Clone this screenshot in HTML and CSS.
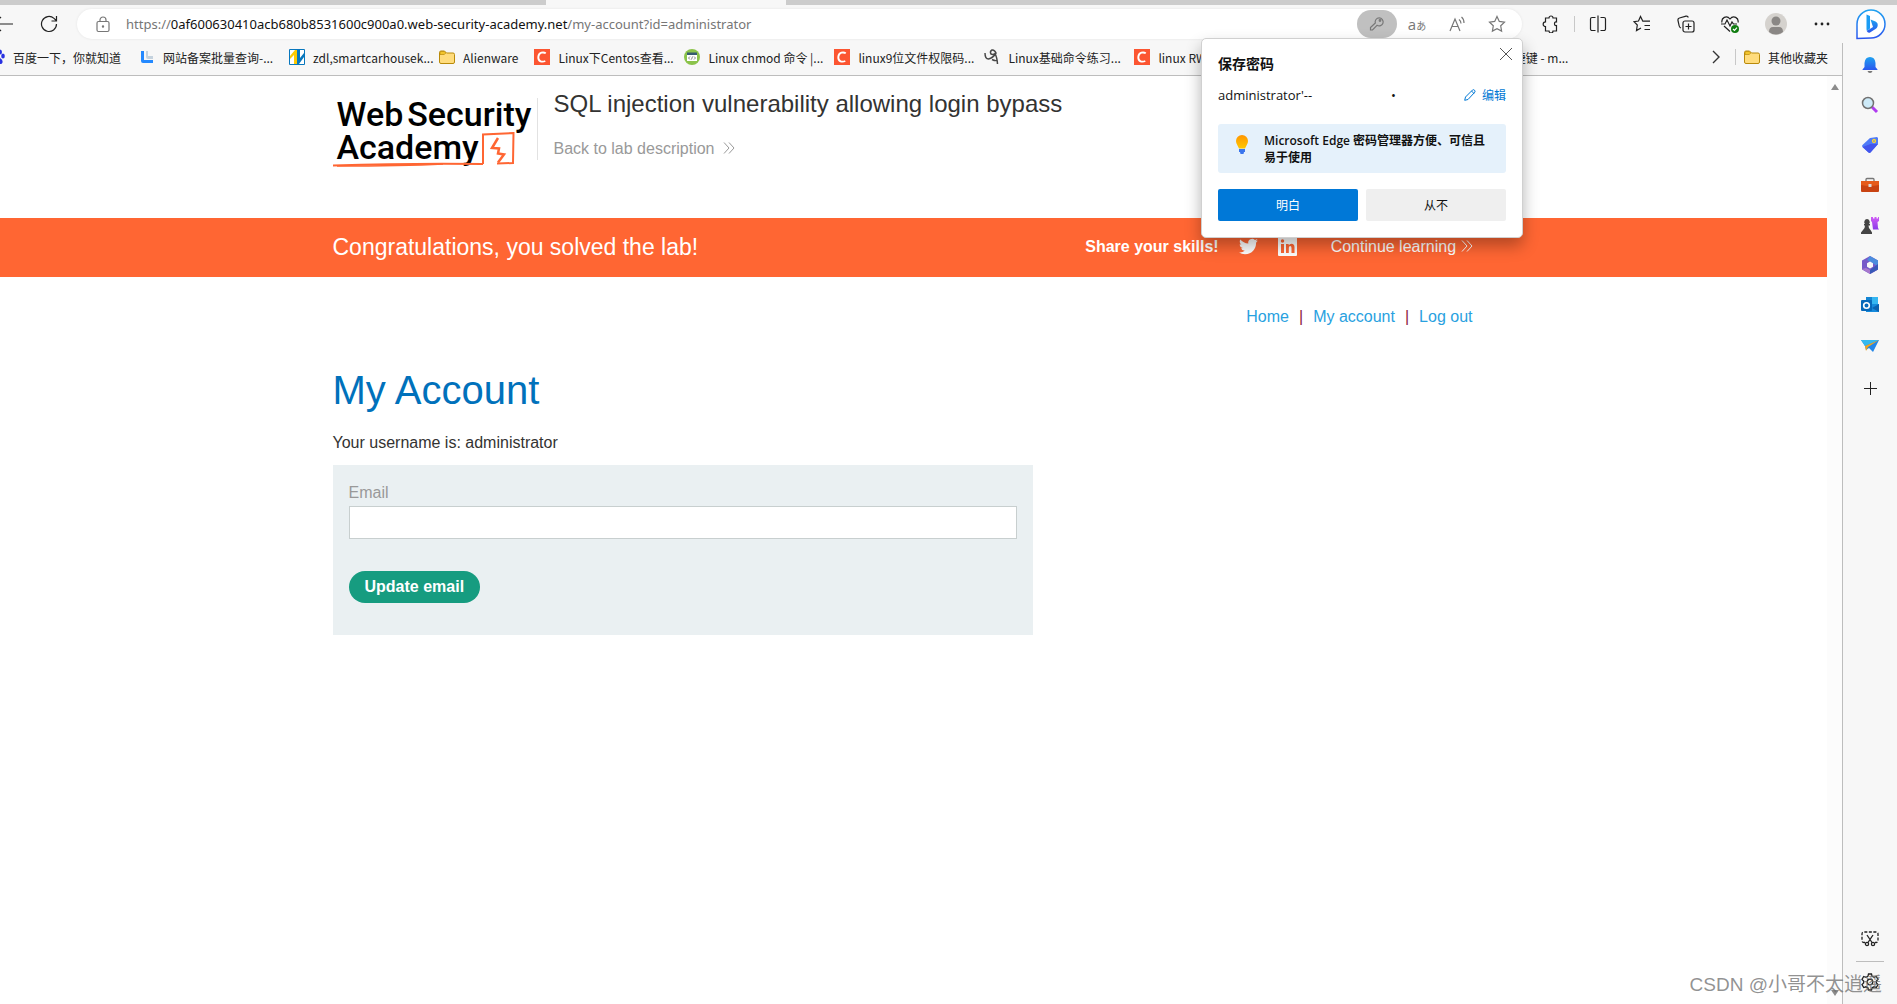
FILE: index.html
```html
<!DOCTYPE html>
<html lang="en">
<head>
    <meta charset="UTF-8">
    <meta name="viewport" content="width=device-width, initial-scale=1.0">
    <title>SQL injection vulnerability allowing login bypass</title>
    <link rel="stylesheet" href="styles.css">
</head>
<body>
    <!-- Shared icons -->
    <svg class="defs" width="0" height="0" aria-hidden="true">
        <defs>
            <linearGradient id="blue" x1="0" y1="0" x2="0" y2="1"><stop offset="0" stop-color="#1fa2f0"/><stop offset="1" stop-color="#2a56ee"/></linearGradient>
            <linearGradient id="violet" x1="0" y1="0" x2="0" y2="1"><stop offset="0" stop-color="#d05cf5"/><stop offset="1" stop-color="#8a3be8"/></linearGradient>
            <linearGradient id="bulb" x1="0" y1="0" x2="0" y2="1"><stop offset="0" stop-color="#ff9500"/><stop offset="1" stop-color="#ffc800"/></linearGradient>
        </defs>
        <symbol id="folder" viewBox="0 0 16 16"><path d="M.5 3.5a1.500 1.500 0 0 1 1.500-1.500h3.500l2 2H14a1.500 1.500 0 0 1 1.500 1.500V13a1.500 1.500 0 0 1-1.500 1.500H2A1.500 1.500 0 0 1 .5 13z" fill="#ffdc7d" stroke="#b98a0a"/><path d="M1 3.500Q1 2.500 2 2.500h3.300l1.500 1.500-1.500 1.500H1z" fill="#f3c52c" stroke="#b98a0a" stroke-width=".7"/></symbol>
        <symbol id="csdn" viewBox="0 0 16 16"><path d="M0 0h16v16H0z" fill="#fc5531"/><path d="M11.800 4.300C9.500 2.800 4.800 3 4.300 8c-.3 4.800 4 5.300 7 4" fill="none" stroke="#fff" stroke-width="1.900"/></symbol>
        <symbol id="chevrons" viewBox="0 0 12 12"><path d="M1 .5 6 6l-5 5.500M6 .5 11 6l-5 5.500" fill="none" stroke="currentColor"/></symbol>
    </svg>

    <div class="tab-strip"><div class="active-tab"></div></div>

    <header class="toolbar">
        <button class="back" aria-label="Back"><svg width="20" height="16" viewBox="0 0 20 16"><path d="M20 8H1M8 1 1 8l7 7"/></svg></button>
        <button class="refresh" aria-label="Refresh"><svg width="18" height="18" viewBox="0 0 18 18"><path d="M16.500 9A7.500 7.500 0 1 1 14 3.400L16.300 5.500M16.500 1v5h-5"/></svg></button>
        <div class="address-bar">
            <svg class="lock" width="14" height="17" viewBox="0 0 14 17"><rect x="1" y="5.500" width="12" height="10" rx="1.500"/><path d="M4 5.500V4a3 3 0 0 1 6 0v1.500"/><circle cx="7" cy="10.500" r=".6"/></svg>
            <div class="url" role="textbox" aria-label="Address">https://<b>0af600630410acb680b8531600c900a0.web-security-academy.net</b>/my-account?id=administrator</div>
            <button class="key" aria-label="Saved passwords"><svg width="16" height="16" viewBox="0 0 16 16"><path d="M8 9.300 3.500 14H1.500v-2.500L6.300 7A4 4 0 1 1 8 9.300z"/><circle cx="11" cy="4.500" r=".8"/></svg></button>
            <button aria-label="Translate"><span class="translate">a<small>あ</small></span></button>
            <button aria-label="Read aloud"><svg width="16" height="16" viewBox="0 0 16 16"><path d="M1 15 6 3l5 12M3 10.500h6M10 3.500q2 1.500 2 4M12.500 1Q15 3 15 7"/></svg></button>
            <button aria-label="Add to favorites"><svg width="18" height="18" viewBox="0 0 18 18"><path d="m9 1.500 2.300 4.900 5.200.7-3.800 3.700.9 5.300L9 13.600l-4.600 2.500.9-5.300-3.800-3.700 5.200-.7z"/></svg></button>
        </div>
        <button aria-label="Extensions"><svg width="18" height="18" viewBox="0 0 18 18"><path d="M5 3h3a2 2 0 0 1 4 0h3.500v4q-2-.5-2 1.700t2 1.800V16H12a2 2 0 0 1-4 0H4.500v-4.500a2.300 2.300 0 1 1 0-4.700V3z"/></svg></button>
        <span class="divider"></span>
        <button aria-label="Split screen"><svg width="18" height="18" viewBox="0 0 18 18"><path d="M6.500 2.500H3A1.500 1.500 0 0 0 1.500 4v10A1.500 1.500 0 0 0 3 15.500h3.500M9 .5v17M11.500 2.500H15A1.500 1.500 0 0 1 16.500 4v10a1.500 1.500 0 0 1-1.500 1.500h-3.500"/></svg></button>
        <button aria-label="Favorites"><svg width="18" height="18" viewBox="0 0 18 18"><path d="M9.500 5.500 7.500 1.500 5.500 6 1 6.700 4.300 10l-.8 5.500 4.500-2.600M7.500 1.500l2.300 4.700H17M11.500 10.500H17M11.500 14.500H17"/></svg></button>
        <button aria-label="Collections"><svg width="18" height="18" viewBox="0 0 18 18"><rect x="6" y="6" width="11" height="11" rx="2"/><path d="M11.500 8.500v6M8.500 11.500h6M4 13Q2.500 12.500 2.200 11L1 5.500Q.6 3.500 2.500 3L9 1.200q1.800-.4 2.300 1.300"/></svg></button>
        <button aria-label="Browser essentials"><svg width="18" height="18" viewBox="0 0 18 18"><path d="M1 7.500C0 3 5.500-.5 9 4c3.500-4.500 9-1 8 3.500M0 9h4l2-4 3 6 2-4 1.500 2H16M3 11l6 5.500"/><circle class="ok" cx="14" cy="14" r="4"/><path class="tick" d="m12 14 1.500 1.500L16 12.700"/></svg></button>
        <button class="profile" aria-label="Profile"><svg width="22" height="22" viewBox="0 0 22 22"><circle cx="11" cy="11" r="11" fill="#d5d2ce"/><circle cx="11" cy="8" r="4.500" fill="#8a8785"/><path d="M4 19q0-5 4-5h6q4 0 4 5-3 2.500-7 2.500T4 19z" fill="#8a8785"/></svg></button>
        <button aria-label="Settings and more"><svg class="dots" width="16" height="4" viewBox="0 0 16 4"><circle cx="2" cy="2" r="1.400"/><circle cx="8" cy="2" r="1.400"/><circle cx="14" cy="2" r="1.400"/></svg></button>
        <button class="bing" aria-label="Bing"><svg width="32" height="32" viewBox="0 0 32 32"><path d="M2 30.500V16A14 14 0 1 1 16 30z" fill="#fff" stroke="url(#blue)" stroke-width="1.500"/><path d="M11.500 6.500 15 8v12.500L12 23q-.5-.5-.5-2z" fill="#1b9df5"/><path d="m15.500 11.500 5 2q3 1.500 2 5-.5 1.500-2 2.500L15 24.500q-2 1-3.300-1.500l6.300-4z" fill="url(#blue)"/></svg></button>
    </header>

    <div class="window">
        <div class="main">
            <nav class="bookmarks" aria-label="Bookmarks">
                <a href="#"><svg width="16" height="16" viewBox="0 0 16 16"><g fill="#2932e1"><ellipse cx="11" cy="3" rx="2" ry="2.500"/><ellipse cx="14" cy="7" rx="1.800" ry="2.500"/><ellipse cx="2" cy="7" rx="1.800" ry="2.500"/><ellipse cx="6" cy="3" rx="2" ry="2.500"/><path d="M8 6q2 0 3.500 3.500 2.500 1 2 4-.5 2-3 1.500H5q-3 0-2.500-3Q3 10 5 9q1-3 3-3z"/></g><path d="M7 11v3M10 11v3" stroke="#fff"/></svg><span>百度一下，你就知道</span></a>
                <a href="#"><svg width="16" height="16" viewBox="0 0 16 16"><path d="M2 2h3v9H14v3H4q-2 0-2-2z" fill="#2489ff"/><path d="M7 2h2v5h5v3H9Q7 10 7 8z" fill="#c4d2de"/></svg><span>网站备案批量查询-...</span></a>
                <a href="#"><svg width="16" height="16" viewBox="0 0 16 16"><path d="M.5.500h15v15H.5z" fill="#fff" stroke="#0877bd"/><path d="M1 7 6 1h2v14H5V6L1 10z" fill="#ffca00"/><path d="M8 1h3v8l4-5v4l-5 7H8z" fill="#0877bd"/></svg><span>zdl,smartcarhousek...</span></a>
                <a href="#" class="short"><svg width="16" height="16"><use href="#folder"/></svg><span>Alienware</span></a>
                <a href="#"><svg width="16" height="16"><use href="#csdn"/></svg><span>Linux下Centos查看...</span></a>
                <a href="#"><svg width="16" height="16" viewBox="0 0 16 16"><circle cx="8" cy="8" r="8" fill="#8bc34a"/><path d="M3 4h10v8H3z" fill="#fff"/><path d="M3 3.500h10V6H3z" fill="#365b70"/><path d="M6 7.500 4.500 9 6 10.500M10 7.500 11.500 9 10 10.500M8.500 7.500l-1 3" fill="none" stroke="#555" stroke-width=".7"/></svg><span>Linux chmod 命令 |...</span></a>
                <a href="#"><svg width="16" height="16"><use href="#csdn"/></svg><span>linux9位文件权限码...</span></a>
                <a href="#"><svg width="16" height="16" viewBox="0 0 16 16"><path d="M1 4q0 6 3.500 6Q9 9 12 4q-1.500-3.500-4-3Q5.500 2.500 7 5q2 1 4-.5Q13 8 13.500 15M8 10.500q3 1.500 5 1" fill="none" stroke="#484848" stroke-width="1.500"/></svg><span>Linux基础命令练习...</span></a>
                <a href="#"><svg width="16" height="16"><use href="#csdn"/></svg><span>linux RW...</span></a>
                <a href="#" aria-label="Bookmark"><svg width="16" height="16"><use href="#csdn"/></svg><span></span></a>
                <a href="#" class="last"><svg width="16" height="16"><use href="#csdn"/></svg><span>快捷键 - m...</span></a>
                <button class="more" aria-label="More bookmarks"><svg width="8" height="14" viewBox="0 0 8 14"><path d="m1 1 6 6-6 6"/></svg></button>
                <span class="divider"></span>
                <a href="#" class="short other"><svg width="16" height="16"><use href="#folder"/></svg><span>其他收藏夹</span></a>
            </nav>

            <div class="viewport">
                <div class="page">
                    <div class="container lab-header">
                        <a href="#" class="logo" aria-label="Web Security Academy">
                            <span class="logo-line">Web <span>Security</span></span>
                            <span class="logo-line">Academy</span>
                            <svg class="logo-mark" width="182" height="36" viewBox="0 0 182 36" fill="none" stroke="#ff6633"><path d="M0 33.500Q80 31 150 32" stroke-width="2"/><path d="M4 34Q70 34 110 32" stroke-width="1.500"/><path d="M150 32V2.500L180.500 1l-.5 30-16 .5" stroke-width="2"/><path d="m165 6-6 10 7 .5-1 5 6 1-6 8" stroke-width="2.500"/></svg>
                        </a>
                        <div class="title">
                            <h2>SQL injection vulnerability allowing login bypass</h2>
                            <a href="#">Back to lab description <svg width="12" height="12"><use href="#chevrons"/></svg></a>
                        </div>
                    </div>

                    <div class="banner">
                        <div class="container">
                            <h4>Congratulations, you solved the lab!</h4>
                            <strong>Share your skills!</strong>
                            <a href="#" class="social" aria-label="Twitter"><svg width="19" height="19" viewBox="0 0 24 24"><path fill="currentColor" d="M23.950 4.570a10 10 0 0 1-2.820.77 4.960 4.960 0 0 0 2.160-2.720c-.95.550-2 .95-3.130 1.180a4.920 4.920 0 0 0-8.380 4.480C7.690 8.100 4.070 6.130 1.640 3.160a4.820 4.820 0 0 0-.67 2.480c0 1.710.87 3.210 2.190 4.100a4.900 4.900 0 0 1-2.230-.62v.06a4.920 4.920 0 0 0 3.950 4.830 5 5 0 0 1-2.210.08 4.940 4.940 0 0 0 4.600 3.420A9.870 9.870 0 0 1 0 19.540a14 14 0 0 0 7.550 2.210c9.050 0 14-7.500 14-13.980 0-.21 0-.42-.02-.63a9.900 9.900 0 0 0 2.420-2.570z"/></svg></a>
                            <a href="#" class="social" aria-label="LinkedIn"><svg width="19" height="19" viewBox="0 0 19 19"><rect width="19" height="19" rx="1" fill="currentColor"/><path d="M3 7h3v9H3zM8 7h2.700v1.300q1-1.500 2.800-1.500 3 0 3 3.500V16h-3v-5q0-2-1.300-2-1.400 0-1.400 2v5H8z" fill="#ff6633"/><circle cx="4.500" cy="4" r="1.700" fill="#ff6633"/></svg></a>
                            <a href="#" class="continue">Continue learning <svg width="12" height="12"><use href="#chevrons"/></svg></a>
                        </div>
                    </div>

                    <div class="container">
                        <nav class="top-links">
                            <a href="#">Home</a><span>|</span><a href="#">My account</a><span>|</span><a href="#">Log out</a>
                        </nav>
                        <h1>My Account</h1>
                        <p>Your username is: administrator</p>
                        <form class="login-form">
                            <label for="email">Email</label>
                            <input type="email" id="email" name="email">
                            <button type="button">Update email</button>
                        </form>
                    </div>
                </div>
                <div class="scrollbar"><i class="up"></i><i class="down"></i></div>
            </div>
        </div>

        <aside class="sidebar">
            <button aria-label="Notifications"><svg width="18" height="18" viewBox="0 0 18 18"><path d="M9 1q5 0 5.500 6v4l2 2.500V14h-15v-.5l2-2.500V7Q4 1 9 1z" fill="url(#blue)"/><path d="M6.500 15h5q-.5 2-2.500 2t-2.500-2z" fill="#777"/></svg></button>
            <button aria-label="Search"><svg width="18" height="18" viewBox="0 0 18 18"><path d="m11 11 5 5" stroke="#b03cf0" stroke-width="3"/><circle cx="7" cy="7" r="5.500" fill="#cdeaf8" stroke="#717171" stroke-width="1.500"/></svg></button>
            <button aria-label="Shopping"><svg width="18" height="18" viewBox="0 0 18 18"><path d="m9 2 7-1 1 1v6l-7.500 8.500q-1 .8-2 0L1.500 11q-1-1 0-2z" fill="#4f7bf7"/><path d="m1.500 11 8-3L17 8l-7.500 8.500q-1 .8-2 0z" fill="#4355ec"/><circle cx="13" cy="5" r="1.500" fill="#5b83d8" stroke="#ffd52d" stroke-width="1.300"/></svg></button>
            <button aria-label="Tools"><svg width="18" height="18" viewBox="0 0 18 18"><path d="M5 5V3.500Q5 2.500 6 2.500h6q1 0 1 1V5" fill="none" stroke="#777" stroke-width="1.300"/><rect y="5" width="18" height="11" rx="1" fill="#c94312"/><path d="M0 5h18v4q-9 2-18 0z" fill="#e65b1b"/><rect x="7.500" y="8" width="3" height="3" fill="#ddd"/></svg></button>
            <button aria-label="Games"><svg width="18" height="18" viewBox="0 0 18 18"><path d="M10 1h2v1.500h1.500V1h2v1.500H17V1h1v4l-1.500 1 .5 6 1 1.500h-6L11 6l-1-1z" fill="url(#violet)"/><path d="M6 3a3 3 0 0 1 2 5h1v1.500H7.500q0 3 2 4.500l1.500 2.500V18H0v-1.500L2 14q2-1.500 2-4.500H3V8h1A3 3 0 0 1 6 3z" fill="#444"/></svg></button>
            <button aria-label="Microsoft 365"><svg width="18" height="18" viewBox="0 0 18 18"><path d="m9 0 8 4.500v9L9 18l-8-4.500v-9z" fill="#7659c9"/><path d="m9 0 8 4.500v6L13 8 6 4z" fill="#4b8cdd"/><path d="m1 13 4-1 4 2 4-2 4 1.500L9 18z" fill="#a778ce"/><path d="M17 8v5.500L9 18v-4l4-3z" fill="#3859b8"/><path d="m9 5.500 3 1.700v3.600l-3 1.700-3-1.700V7.200z" fill="#f7f7f7"/></svg></button>
            <button aria-label="Outlook"><svg width="18" height="18" viewBox="0 0 18 18"><path d="M5 1h12v9H5z" fill="#35b6f1"/><path d="M5 1h6v5H5z" fill="#1485d3"/><path d="M5 8h13v8H5z" fill="#168bdc"/><path d="m11 12 7-4v8z" fill="#0b62b0"/><rect y="4" width="11" height="11" rx="1" fill="#0769ba"/><circle cx="5.500" cy="9.500" r="2.800" fill="none" stroke="#fff" stroke-width="1.600"/></svg></button>
            <button aria-label="Drop"><svg width="18" height="18" viewBox="0 0 18 18"><path d="M0 4h18l-6 12-4-4-3 2-1-4z" fill="#2386e8"/><path d="M0 4h18L4 10z" fill="#35b9ef"/><path d="M18 4 4 10l1 5 2-4z" fill="#f3a51d"/></svg></button>
            <button class="add" aria-label="Customize sidebar"><svg width="13" height="13" viewBox="0 0 13 13"><path d="M6.500 0v13M0 6.500h13" stroke="#222"/></svg></button>
            <div class="sidebar-bottom">
                <button aria-label="Screenshot"><svg width="18" height="16" viewBox="0 0 18 16" fill="none" stroke="#222" stroke-width="1.300"><path d="M4 11.500H3q-2 0-2-2V3q0-2 2-2h12q2 0 2 2v6.500q0 2-2 2h-1" stroke-dasharray="3 1.500"/><path d="m6 4 5 7.500M12 4l-5 7.500"/><circle cx="6" cy="13" r="1.600"/><circle cx="12" cy="13" r="1.600"/></svg></button>
                <hr>
                <button aria-label="Settings"><svg width="18" height="18" viewBox="0 0 18 18" fill="none" stroke="#222" stroke-width="1.300"><path d="m7.500 1-.6 2.300-2 1-2.200-.8L1 6.500 2.600 8v2L1 11.500l1.700 3 2.200-.7 2 1 .6 2.200h3l.6-2.200 2-1 2.200.7 1.700-3L15.400 10V8L17 6.500l-1.700-3-2.200.8-2-1L10.500 1z"/><circle cx="9" cy="9" r="2.800"/></svg></button>
            </div>
        </aside>
    </div>

    <!-- Password prompt -->
    <div class="prompt" role="dialog" aria-labelledby="prompt-title">
        <button class="close" aria-label="Close"><svg width="12" height="12" viewBox="0 0 12 12"><path d="m0 0 12 12M12 0 0 12" stroke="#555"/></svg></button>
        <h3 id="prompt-title">保存密码</h3>
        <div class="credentials">
            <span class="name">administrator'--</span>
            <span class="secret">•</span>
            <button class="edit"><svg width="12" height="12" viewBox="0 0 12 12"><path d="M.7 11.300 1.500 8 8.500 1q1-.8 2 .2t.3 2L4 10.500zM7.500 2l2.500 2.500" fill="none" stroke="currentColor"/></svg>编辑</button>
        </div>
        <div class="tip">
            <svg width="12" height="20" viewBox="0 0 12 20"><path d="M6 0a6 6 0 0 1 6 6q0 2.500-1.500 4.500L9 13.500H3l-1.500-3Q0 8.500 0 6a6 6 0 0 1 6-6z" fill="url(#bulb)"/><path d="M3 14h6v3H8l-.5 2h-3L4 17H3z" fill="#3a75ed"/></svg>
            <span>Microsoft Edge 密码管理器方便、可信且易于使用</span>
        </div>
        <div class="actions">
            <button class="primary">明白</button>
            <button>从不</button>
        </div>
    </div>

    <div class="watermark">CSDN @小哥不太逍遥</div>
</body>
</html>
```
FILE: styles.css
```css
* {
    box-sizing: border-box;
}

body {
    display: flex;
    flex-direction: column;
    height: 100vh;
    margin: 0;
    overflow: hidden;
    position: relative;
    font-family: "Open Sans", "Noto Sans CJK SC", sans-serif;
    font-size: 12px;
    color: #222;
    background-color: #f7f7f7;
}

a {
    color: inherit;
    text-decoration: none;
}

button {
    border: 0;
    padding: 0;
    background: none;
    font: inherit;
    color: inherit;
}

h1, h2, h3, h4, p {
    margin: 0;
    font-weight: normal;
}

svg {
    flex-shrink: 0;
}

.defs {
    position: absolute;
}

/* Browser chrome */
.tab-strip {
    flex: none;
    height: 5px;
    padding-left: 546px;
    background-color: #cccccc;
}

.active-tab {
    width: 240px;
    height: 5px;
    background-color: #f7f7f7;
}

.toolbar {
    display: flex;
    flex: none;
    align-items: center;
    height: 38px;
}

.toolbar button {
    display: flex;
    align-items: center;
    justify-content: center;
    width: 44px;
    height: 28px;
}

.toolbar svg {
    fill: none;
    stroke: #222;
    stroke-width: 1.2;
}

.toolbar .back {
    width: 28px;
    margin-left: -11px;
}

.toolbar .refresh {
    width: 48px;
    margin: 0 4px 0 8px;
}

.toolbar .profile {
    width: 48px;
}

.toolbar .profile svg, .toolbar .bing svg {
    stroke: none;
}

.toolbar .bing {
    width: 53px;
}

.toolbar .dots {
    fill: #222;
    stroke: none;
}

.toolbar .ok {
    fill: #107c10;
    stroke: none;
}

.toolbar .tick {
    stroke: #fff;
}

.address-bar {
    display: flex;
    flex: 1;
    align-items: center;
    height: 30px;
    margin-right: 6px;
    padding: 0 5px 0 19px;
    border-radius: 15px;
    background-color: #fff;
    box-shadow: 0 0 3px rgba(0, 0, 0, 0.08);
}

.address-bar svg {
    stroke: #777;
}

.address-bar button {
    width: 40px;
    color: #777;
}

.address-bar .key {
    border-radius: 14px;
    background-color: #c0c0c0;
}

.url {
    flex: 1;
    margin-left: 16px;
    font-family: "Noto Sans", "Open Sans", sans-serif;
    font-size: 13px;
    color: #767676;
}

.url b {
    font-weight: normal;
    color: #111;
}

.translate {
    font-size: 15px;
}

.translate small {
    font-size: 10px;
}

.divider {
    width: 1px;
    height: 16px;
    margin: 0 1px 0 2px;
    background-color: #c8c8c8;
}

.window {
    display: flex;
    flex: 1;
    min-height: 0;
}

.main {
    display: flex;
    flex: 1;
    flex-direction: column;
    min-width: 0;
}

.bookmarks {
    display: flex;
    flex: none;
    align-items: center;
    gap: 16px;
    height: 32px;
    margin-left: -11px;
    padding: 0 14px 4px 0;
    font-family: "Noto Sans CJK SC", "Open Sans", sans-serif;
}

.bookmarks a {
    display: flex;
    flex: none;
    align-items: center;
    gap: 8px;
    white-space: nowrap;
}

.bookmarks a span {
    width: 110px;
}

.bookmarks .short span {
    width: auto;
}

.bookmarks .last span {
    text-align: right;
}

.bookmarks .more {
    display: flex;
    margin: 0 3px 0 auto;
}

.bookmarks .more svg {
    fill: none;
    stroke: #333;
    stroke-width: 1.4;
}

.bookmarks .divider {
    margin: 0 -8px 0 -4px;
}

.viewport {
    display: flex;
    flex: 1;
    min-height: 0;
    border-top: 1px solid #bdbdbd;
    background-color: #fff;
}

.scrollbar {
    display: flex;
    flex-direction: column;
    align-items: center;
    justify-content: space-between;
    width: 15px;
    padding: 8px 0;
    background-color: #fcfcfc;
}

.up, .down {
    border: 4px solid transparent;
    border-top: 0;
    border-bottom: 6px solid #8b8b8b;
}

.down {
    border-top: 6px solid #8b8b8b;
    border-bottom: 0;
}

.sidebar {
    display: flex;
    flex-direction: column;
    align-items: center;
    width: 55px;
    padding-top: 2px;
    border-left: 1px solid #bdbdbd;
}

.sidebar button {
    display: flex;
    align-items: center;
    justify-content: center;
    width: 40px;
    height: 40px;
}

.sidebar .add {
    margin-top: 3px;
}

.sidebar-bottom {
    margin-top: auto;
    padding-bottom: 2px;
}

.sidebar-bottom hr {
    width: 28px;
    margin: 2px auto 0;
    border: 0;
    border-top: 1px solid #bdbdbd;
}

/* Lab page */
.page {
    flex: 1;
    font-family: "Liberation Sans", Arial, sans-serif;
    font-size: 16px;
    line-height: 20px;
    color: #333332;
}

.container {
    width: 1140px;
    max-width: 100%;
    margin: 0 auto;
    position: relative;
    right: 11px;
}

.lab-header {
    display: flex;
    height: 142px;
    padding-top: 22px;
}

.logo {
    position: relative;
    width: 205px;
    height: 62px;
    padding-left: 4px;
    border-right: 1px solid #e2e2e2;
    font-family: Roboto, sans-serif;
    font-size: 34px;
    font-weight: 500;
    line-height: 33px;
    color: #000;
}

.logo-line {
    display: flex;
    gap: 4px;
}

.logo-mark {
    position: absolute;
    left: 0;
    top: 34px;
}

.title {
    padding-left: 16px;
}

.title h2 {
    margin: -8px 0 21px;
    font-size: 24px;
    line-height: 28px;
}

.title a {
    color: #999;
}

.title svg {
    margin-left: 4px;
}

.banner {
    background-color: #ff6633;
    color: #fff;
}

.banner .container {
    display: flex;
    align-items: center;
    height: 59px;
    padding-bottom: 2px;
}

.banner h4 {
    flex: 1;
    font-size: 23px;
    line-height: 28px;
}

.social {
    display: flex;
    margin-left: 20px;
    color: #fff;
}

.continue {
    margin-left: 34px;
}

.top-links {
    display: flex;
    justify-content: flex-end;
    gap: 10px;
    padding-top: 30px;
    color: #29a1df;
}

.top-links span {
    color: #8c1d40;
}

.page h1 {
    margin: 39px 0 19px;
    font-size: 40px;
    line-height: 48px;
    color: #0071bb;
}

.login-form {
    display: flex;
    flex-direction: column;
    align-items: flex-start;
    width: 700px;
    max-width: 100%;
    margin-top: 12px;
    padding: 18px 16px 32px;
    background-color: #eaf0f2;
}

.login-form label {
    color: #999;
}

.login-form input {
    width: 100%;
    height: 33px;
    margin: 3px 0 32px;
    padding: 0 8px;
    border: 1px solid #c8cfcf;
    font: inherit;
    background-color: #fff;
}

.login-form button {
    height: 32px;
    padding: 0 16px;
    border-radius: 16px;
    font-weight: bold;
    color: #fff;
    background-color: #169c80;
}

/* Password prompt */
.prompt {
    position: absolute;
    top: 38px;
    right: 374px;
    width: 322px;
    padding: 16px;
    border: 1px solid #d0d0d0;
    border-radius: 5px;
    color: #111;
    background-color: #fff;
    box-shadow: 0 8px 16px rgba(0, 0, 0, 0.3);
}

.prompt .close {
    position: absolute;
    top: 9px;
    right: 10px;
    display: flex;
}

.prompt h3 {
    font-size: 14px;
    font-weight: bold;
    line-height: 18px;
}

.credentials {
    display: flex;
    align-items: center;
    height: 20px;
    margin: 12px 0 19px;
    font-size: 13px;
}

.credentials span {
    flex: 1;
}

.credentials .name {
    flex: none;
    width: 173px;
}

.edit {
    display: flex;
    align-items: center;
    gap: 6px;
    font-size: 12px;
    color: #0078d4;
}

.tip {
    display: flex;
    align-items: flex-start;
    gap: 16px;
    height: 49px;
    padding: 8px 18px;
    border-radius: 3px;
    font-weight: 600;
    line-height: 17px;
    background-color: #e5f1fb;
}

.tip svg {
    margin-top: 3px;
}

.actions {
    display: flex;
    gap: 8px;
    margin-top: 16px;
}

.actions button {
    flex: 1;
    height: 32px;
    border-radius: 2px;
    background-color: #efefef;
}

.actions .primary {
    color: #fff;
    background-color: #0078d7;
}

.watermark {
    position: absolute;
    right: 15px;
    bottom: 4px;
    font-family: "Liberation Sans", "Noto Sans CJK SC", sans-serif;
    font-size: 19px;
    line-height: 30px;
    color: rgba(110, 110, 110, 0.75);
    pointer-events: none;
}
```
